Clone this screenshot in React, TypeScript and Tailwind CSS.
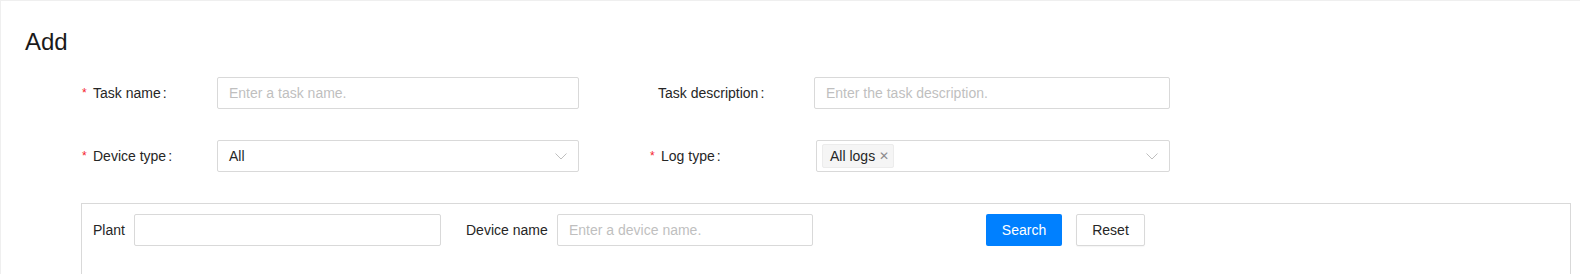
import React from 'react'

const Chevron = () => (
  <svg width="12" height="7" viewBox="0 0 12 7" fill="none">
    <path d="M0.5 0.5 L6 6 L11.5 0.5" stroke="#bfbfbf" strokeWidth="1" />
  </svg>
)

const Label = ({ text, required, width, pad = 0 }: { text: string; required?: boolean; width: number; pad?: number }) => (
  <div className="flex items-center h-8 shrink-0 leading-[22px] text-[14px] text-[#262626]" style={{ width, paddingLeft: pad }}>
    {required && <span className="w-[11px] text-[#f5222d] text-[12px]">*</span>}
    <span>{text}</span>
    <span className="ml-[2px]">:</span>
  </div>
)

const TextInput = ({ placeholder, width }: { placeholder?: string; width: number }) => (
  <input
    className="h-8 shrink-0 border border-[#d9d9d9] rounded-[2px] pl-[11px] text-[14px] text-[#262626] placeholder:text-[#bfbfbf] outline-none bg-white"
    style={{ width }}
    placeholder={placeholder}
  />
)

export default function App() {
  return (
    <div className="w-full h-[274px] bg-[#efefef] pt-px pl-px overflow-hidden font-['Liberation_Sans',Arial,sans-serif]">
      <div className="bg-white h-full flex flex-col pl-[24px] pt-[25px]">
        <h1 className="text-[24px] leading-8 text-[#1a1a1a]">Add</h1>

        <div className="flex items-center ml-[57px] mt-[19px]">
          <Label text="Task name" required width={135} />
          <TextInput placeholder="Enter a task name." width={362} />
          <div className="w-[71px] shrink-0" />
          <Label text="Task description" width={164} pad={8} />
          <TextInput placeholder="Enter the task description." width={356} />
        </div>

        <div className="flex items-center ml-[57px] mt-[31px]">
          <Label text="Device type" required width={135} />
          <div className="w-[362px] h-8 shrink-0 border border-[#d9d9d9] rounded-[2px] pl-[11px] pr-[11px] flex items-center justify-between text-[14px] text-[#262626]">
            <span>All</span>
            <Chevron />
          </div>
          <div className="w-[71px] shrink-0" />
          <Label text="Log type" required width={166} />
          <div className="w-[354px] h-8 shrink-0 border border-[#d9d9d9] rounded-[2px] pl-[5px] pr-[11px] flex items-center justify-between">
            <span className="h-6 flex items-center bg-[#f5f5f5] border border-[#ececec] rounded-[2px] pl-[7px] pr-[4px] text-[14px] text-[#262626]">
              All logs
              <span className="ml-[4px] text-[12px] text-[#8c8c8c] leading-none">✕</span>
            </span>
            <Chevron />
          </div>
        </div>

        <div className="ml-[56px] mr-[9px] mt-[31px] flex-1 border border-[#d9d9d9] border-b-0 pt-[10px] pl-[11px]">
          <div className="flex items-center text-[14px] text-[#262626]">
            <span className="w-[41px] shrink-0">Plant</span>
            <TextInput width={307} />
            <span className="ml-[25px] w-[91px] shrink-0">Device name</span>
            <TextInput placeholder="Enter a device name." width={256} />
            <button className="ml-[173px] w-[76px] h-8 rounded-[2px] bg-[#0080ff] text-white text-[14px]">Search</button>
            <button className="ml-[14px] w-[69px] h-8 rounded-[2px] border border-[#d9d9d9] bg-white text-[#262626] text-[14px] shadow-[0_1px_1px_rgba(0,0,0,0.04)]">Reset</button>
          </div>
        </div>
      </div>
    </div>
  )
}
